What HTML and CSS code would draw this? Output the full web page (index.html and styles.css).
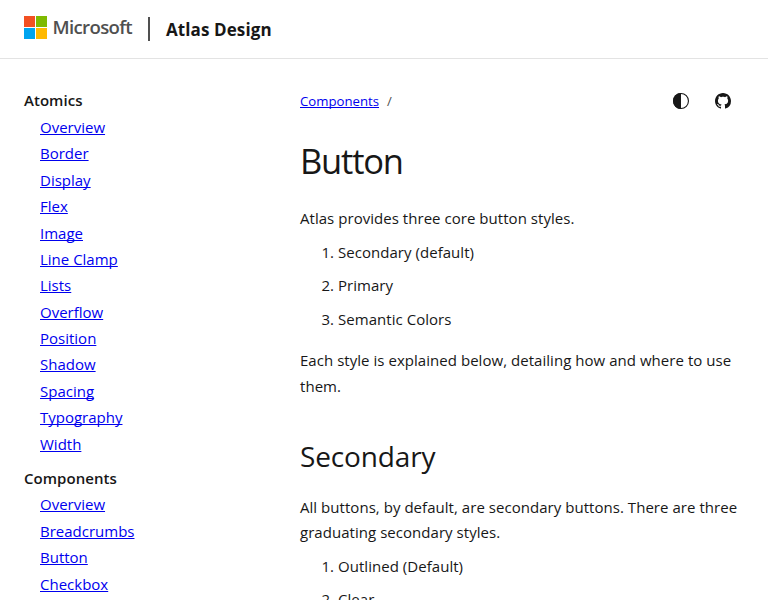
FILE: index.html
```html
<!DOCTYPE html>
<html lang="en">
<head>
<meta charset="utf-8">
<title>Button - Atlas Design</title>
<link rel="stylesheet" href="styles.css">
</head>
<body>
<header class="site-header">
  <a class="brand">
    <svg class="brand-mark" width="23" height="23" viewBox="0 0 23 23" aria-hidden="true">
      <path fill="#f25022" d="M0 0h11v11H0z"/><path fill="#7fba00" d="M12 0h11v11H12z"/>
      <path fill="#00a4ef" d="M0 12h11v11H0z"/><path fill="#ffb900" d="M12 12h11v11H12z"/>
    </svg>
    <span class="brand-name">Microsoft</span>
  </a>
  <span class="divider"></span>
  <span class="site-name">Atlas Design</span>
</header>
<div class="layout">
  <nav class="sidebar">
    <section class="group">
      <h2 class="group-title">Atomics</h2>
      <ul class="links">
        <li><a href="#">Overview</a></li>
        <li><a href="#">Border</a></li>
        <li><a href="#">Display</a></li>
        <li><a href="#">Flex</a></li>
        <li><a href="#">Image</a></li>
        <li><a href="#">Line Clamp</a></li>
        <li><a href="#">Lists</a></li>
        <li><a href="#">Overflow</a></li>
        <li><a href="#">Position</a></li>
        <li><a href="#">Shadow</a></li>
        <li><a href="#">Spacing</a></li>
        <li><a href="#">Typography</a></li>
        <li><a href="#">Width</a></li>
      </ul>
    </section>
    <section class="group">
      <h2 class="group-title">Components</h2>
      <ul class="links">
        <li><a href="#">Overview</a></li>
        <li><a href="#">Breadcrumbs</a></li>
        <li><a href="#">Button</a></li>
        <li><a href="#">Checkbox</a></li>
      </ul>
    </section>
  </nav>
  <main class="content">
    <div class="toolbar">
      <div class="crumbs"><a href="#">Components</a><span class="slash">/</span></div>
      <div class="actions">
        <svg width="16" height="16" viewBox="0 0 16 16" aria-hidden="true"><circle cx="8" cy="8" r="7.45" fill="none" stroke="#171717" stroke-width="1.1"/><path fill="#171717" d="M8 0a8 8 0 0 0 0 16z"/></svg>
        <svg width="16" height="16" viewBox="0 0 16 16" aria-hidden="true"><path fill="#171717" d="M8 0C3.58 0 0 3.58 0 8c0 3.54 2.29 6.53 5.47 7.59.4.07.55-.17.55-.38 0-.19-.01-.82-.01-1.49-2.01.37-2.53-.49-2.69-.94-.09-.23-.48-.94-.82-1.13-.28-.15-.68-.52-.01-.53.63-.01 1.08.58 1.23.82.72 1.21 1.87.87 2.33.66.07-.52.28-.87.51-1.07-1.78-.2-3.64-.89-3.64-3.95 0-.87.31-1.59.82-2.15-.08-.2-.36-1.02.08-2.12 0 0 .67-.21 2.2.82.64-.18 1.32-.27 2-.27s1.36.09 2 .27c1.53-1.04 2.2-.82 2.2-.82.44 1.1.16 1.92.08 2.12.51.56.82 1.27.82 2.15 0 3.07-1.87 3.75-3.65 3.95.29.25.54.73.54 1.48 0 1.07-.01 1.93-.01 2.2 0 .21.15.46.55.38A8.01 8.01 0 0 0 16 8c0-4.42-3.58-8-8-8z"/></svg>
      </div>
    </div>
    <h1 class="title">Button</h1>
    <p>Atlas provides three core button styles.</p>
    <ol class="steps">
      <li>Secondary (default)</li>
      <li>Primary</li>
      <li>Semantic Colors</li>
    </ol>
    <p>Each style is explained below, detailing how and where to use them.</p>
    <h2 class="subtitle">Secondary</h2>
    <p>All buttons, by default, are secondary buttons. There are three graduating secondary styles.</p>
    <ol class="steps">
      <li>Outlined (Default)</li>
      <li>Clear</li>
    </ol>
  </main>
</div>
</body>
</html>
```
FILE: styles.css
```css
* { box-sizing: border-box; }
html { height: 100%; overflow: hidden; }
body {
  height: 100%;
  margin: 0;
  overflow: hidden;
  background: #fff;
  color: #171717;
  font-family: "Open Sans", "Noto Sans", sans-serif;
  font-size: 15px;
  letter-spacing: 0.04px;
  line-height: 25.6px;
}
h1, h2, p, ul, ol { margin: 0; padding: 0; }
a { color: #0000ee; }

.site-header {
  display: flex;
  align-items: center;
  height: 59px;
  padding: 0 24px;
  border-bottom: 1px solid #e3e3e3;
}
.brand { display: flex; align-items: center; height: 23px; margin-bottom: 4px; }
.brand-name {
  width: 79px;
  margin: 0 0 0 5.5px;
  color: #505050;
  font-size: 18.6px;
  font-weight: 600;
  letter-spacing: -0.65px;
  white-space: nowrap;
}
.divider { width: 2px; height: 24px; margin: 0 16px 0 16.5px; background: #505050; }
.site-name { margin-top: 2px; font-size: 17px; font-weight: 700; letter-spacing: 0.1px; white-space: nowrap; }

.layout { display: grid; grid-template-columns: 252px 444px; column-gap: 24px; padding: 0 24px; }
.sidebar { padding-top: 28px; }
.group { margin-bottom: 8.2px; }
.group-title { font-size: 15px; font-weight: 600; line-height: 26.4px; }
.links { list-style: none; padding-left: 16px; line-height: 26.38px; letter-spacing: 0; }
.group:first-child .links { padding-top: 0.6px; }
.links a, .crumbs a {
  text-underline-offset: 1px;
  text-decoration-thickness: 1px;
  text-decoration-skip-ink: none;
}

.toolbar { display: flex; justify-content: space-between; align-items: center; height: 32px; margin-top: 26px; }
.crumbs { padding-top: 2px; font-size: 13.2px; letter-spacing: 0; }
.slash { margin-left: 8px; color: #505050; }
.actions { display: flex; gap: 26px; padding-right: 13px; }
.title { margin-top: 20px; font-size: 34.5px; font-weight: 400; line-height: 48px; letter-spacing: -1.2px; }
.title + p { margin-top: 21px; }
.steps { padding-left: 38px; }
.steps li { margin-top: 8px; }
.steps + p { margin-top: 16px; }
.subtitle { margin: 37px 0 20px; font-size: 28px; font-weight: 400; line-height: 38px; letter-spacing: -0.15px; }
```
